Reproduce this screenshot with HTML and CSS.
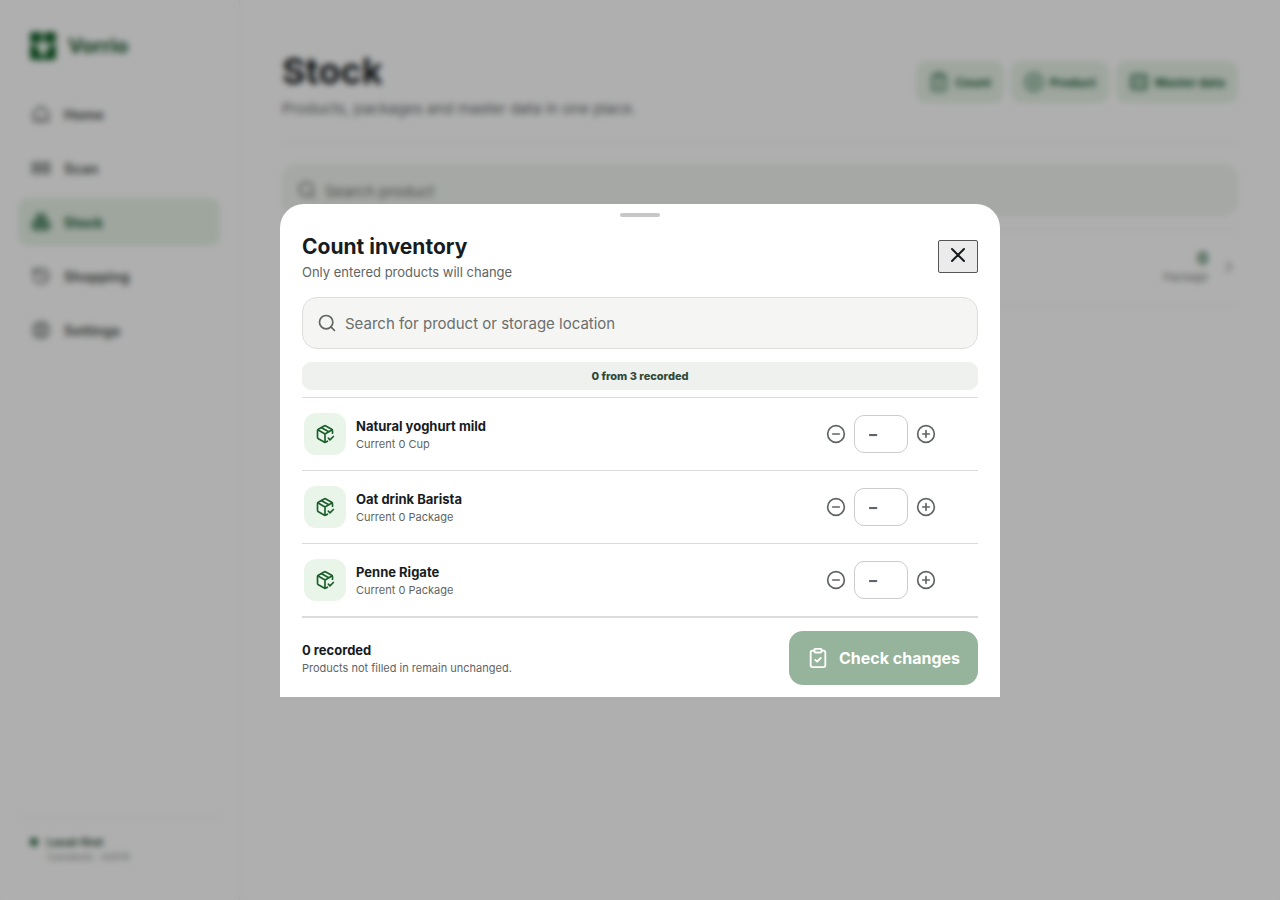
FILE: index.html
```html
<!DOCTYPE html>
<html lang="en">
<head>
    <meta charset="UTF-8">
    <meta name="viewport" content="width=device-width, initial-scale=1.0">
    <title>Vorrio - Stock</title>
    <link rel="stylesheet" href="styles.css">
</head>
<body>
    <!-- Shared icons -->
    <svg class="icon-defs" aria-hidden="true">
        <symbol id="icon-search" viewBox="0 0 24 24"><circle cx="11" cy="11" r="8"/><path d="M21 21l-4.3-4.3"/></symbol>
        <symbol id="icon-minus" viewBox="0 0 24 24"><circle cx="12" cy="12" r="10"/><path d="M8 12h8"/></symbol>
        <symbol id="icon-plus" viewBox="0 0 24 24"><circle cx="12" cy="12" r="10"/><path d="M8 12h8M12 8v8"/></symbol>
        <symbol id="icon-clipboard" viewBox="0 0 24 24"><rect x="8" y="2" width="8" height="4" rx="1"/><path d="M16 4h2a2 2 0 0 1 2 2v14a2 2 0 0 1-2 2H6a2 2 0 0 1-2-2V6a2 2 0 0 1 2-2h2M9 14l2 2 4-4"/></symbol>
        <symbol id="icon-package" viewBox="0 0 24 24"><path d="M12 22V12M3.3 7L12 12l8.7-5M7.5 4.3l9 5.1"/><path d="M21 11V8a2 2 0 0 0-1-1.7l-7-4a2 2 0 0 0-2 0l-7 4A2 2 0 0 0 3 8v8a2 2 0 0 0 1 1.7l7 4a2 2 0 0 0 2 0l2-1.1M16 17l2 2 4-4"/></symbol>
    </svg>

    <div class="app">
        <aside class="sidebar">
            <div class="brand">
                <svg class="brand-logo" viewBox="0 0 26 28"><rect width="12" height="11" rx="2"/><rect x="14" width="12" height="11" rx="2"/><path d="M0 13h6l7 12 7-12h6v12a3 3 0 0 1-3 3H3a3 3 0 0 1-3-3z"/><path class="brand-leaf" d="M7 13l5 5 1 3 1-3 5-5-2 8-4 4-4-4z"/></svg>
                <span>Vorrio</span>
            </div>
            <nav class="nav">
                <a href="#"><svg class="icon" viewBox="0 0 24 24"><path d="M3 10l9-7 9 7v9a2 2 0 0 1-2 2H5a2 2 0 0 1-2-2zM8 16c2 2 6 2 8 0"/></svg>Home</a>
                <a href="#"><svg class="icon" viewBox="0 0 24 24"><path d="M2 5v14M6 5v14M10 5v14M14 5v14M18 5v14M22 5v14"/></svg>Scan</a>
                <a href="#" class="active"><svg class="icon" viewBox="0 0 24 24"><path d="M7 4l5-2 5 2v6l-5 3-5-3zM2 13l5-3 5 3v6l-5 3-5-3zM12 13l5-3 5 3v6l-5 3-5-3zM2 13l5 3 5-3 5 3 5-3M7 16v6M17 16v6M7 5l5 3 5-3M12 8v5"/></svg>Stock</a>
                <a href="#"><svg class="icon" viewBox="0 0 24 24"><path d="M3 12a9 9 0 1 0 9-9 9.8 9.8 0 0 0-6.7 2.7L3 8M3 3v5h5M12 7v5l4 2"/></svg>Shopping</a>
                <a href="#"><svg class="icon" viewBox="0 0 24 24"><path d="M12 2l3 3 4-1 1 4 2 4-2 4-1 4-4-1-3 3-3-3-4 1-1-4-2-4 2-4 1-4 4 1z"/><circle cx="12" cy="12" r="4"/></svg>Settings</a>
            </nav>
            <div class="status">
                <span class="status-dot"></span>
                <div>
                    <strong>Local-first</strong>
                    <small>3 products · v0.6.10</small>
                </div>
            </div>
        </aside>

        <main class="main">
            <header class="page-header">
                <div>
                    <h1>Stock</h1>
                    <p>Products, packages and master data in one place.</p>
                </div>
                <div class="page-actions">
                    <button type="button"><svg class="icon"><use href="#icon-clipboard"/></svg>Count</button>
                    <button type="button"><svg class="icon"><use href="#icon-plus"/></svg>Product</button>
                    <button type="button"><svg class="icon" viewBox="0 0 24 24"><rect x="3" y="3" width="18" height="18" rx="3"/><path d="M3 8h18M3 16h18"/></svg>Master data</button>
                </div>
            </header>
            <label class="search page-search">
                <svg class="icon"><use href="#icon-search"/></svg>
                <input type="search" placeholder="Search product" aria-label="Search product">
            </label>
            <div class="stock-row">
                <div class="stock-amount">
                    <strong>0</strong>
                    <small>Package</small>
                </div>
                <svg class="icon" viewBox="0 0 24 24"><path d="M9 18l6-6-6-6"/></svg>
            </div>
        </main>
    </div>

    <!-- Count dialog -->
    <div class="backdrop">
        <section class="sheet" role="dialog" aria-modal="true" aria-labelledby="sheetTitle">
            <div class="sheet-handle"></div>
            <header class="sheet-header">
                <div>
                    <h2 id="sheetTitle">Count inventory</h2>
                    <p>Only entered products will change</p>
                </div>
                <button type="button" class="close-button" aria-label="Close">
                    <svg class="icon" viewBox="0 0 24 24"><path d="M18 6L6 18M6 6l12 12"/></svg>
                </button>
            </header>

            <label class="search">
                <svg class="icon"><use href="#icon-search"/></svg>
                <input type="search" placeholder="Search for product or storage location" aria-label="Search for product or storage location">
            </label>
            <div class="progress">0 from 3 recorded</div>

            <ul class="count-list">
                <li class="count-row">
                    <span class="tile"><svg class="icon"><use href="#icon-package"/></svg></span>
                    <div class="count-info">
                        <strong>Natural yoghurt mild</strong>
                        <small>Current 0 Cup</small>
                    </div>
                    <div class="stepper">
                        <button type="button" aria-label="Decrease"><svg class="icon"><use href="#icon-minus"/></svg></button>
                        <input type="text" inputmode="decimal" placeholder="–" aria-label="Natural yoghurt mild count">
                        <button type="button" aria-label="Increase"><svg class="icon"><use href="#icon-plus"/></svg></button>
                    </div>
                </li>
                <li class="count-row">
                    <span class="tile"><svg class="icon"><use href="#icon-package"/></svg></span>
                    <div class="count-info">
                        <strong>Oat drink Barista</strong>
                        <small>Current 0 Package</small>
                    </div>
                    <div class="stepper">
                        <button type="button" aria-label="Decrease"><svg class="icon"><use href="#icon-minus"/></svg></button>
                        <input type="text" inputmode="decimal" placeholder="–" aria-label="Oat drink Barista count">
                        <button type="button" aria-label="Increase"><svg class="icon"><use href="#icon-plus"/></svg></button>
                    </div>
                </li>
                <li class="count-row">
                    <span class="tile"><svg class="icon"><use href="#icon-package"/></svg></span>
                    <div class="count-info">
                        <strong>Penne Rigate</strong>
                        <small>Current 0 Package</small>
                    </div>
                    <div class="stepper">
                        <button type="button" aria-label="Decrease"><svg class="icon"><use href="#icon-minus"/></svg></button>
                        <input type="text" inputmode="decimal" placeholder="–" aria-label="Penne Rigate count">
                        <button type="button" aria-label="Increase"><svg class="icon"><use href="#icon-plus"/></svg></button>
                    </div>
                </li>
            </ul>

            <footer class="sheet-footer">
                <div class="count-info">
                    <strong>0 recorded</strong>
                    <small>Products not filled in remain unchanged.</small>
                </div>
                <button type="button" class="primary-button" disabled>
                    <svg class="icon"><use href="#icon-clipboard"/></svg>
                    Check changes
                </button>
            </footer>
        </section>
    </div>
</body>
</html>
```
FILE: styles.css
```css
/* Reset and base */
* {
    margin: 0;
    padding: 0;
    box-sizing: border-box;
}

body {
    font-family: Inter, "Liberation Sans", sans-serif;
    font-size: 14px;
    color: #171c1f;
    background: #fbfbfb;
}

button,
input {
    font: inherit;
    color: inherit;
}

strong,
small {
    display: block;
}

.icon-defs {
    position: absolute;
    width: 0;
    height: 0;
}

.icon {
    display: block;
    flex: none;
    width: 20px;
    height: 20px;
    fill: none;
    stroke: currentColor;
    stroke-width: 2;
    stroke-linecap: round;
    stroke-linejoin: round;
}

/* App shell */
.app {
    display: grid;
    grid-template-columns: 240px 1fr;
    min-height: 100vh;
}

.sidebar {
    display: flex;
    flex-direction: column;
    padding: 32px 19px 36px 18px;
    border-right: 1px solid #e4e6e4;
}

.brand {
    display: flex;
    align-items: center;
    gap: 12px;
    padding-left: 12px;
    font-size: 20px;
    font-weight: 700;
    line-height: 28px;
    color: #14522a;
}

.brand-logo {
    width: 26px;
    height: 28px;
    fill: #14602a;
}

.brand-leaf {
    fill: #b9dcb9;
}

.nav {
    display: grid;
    gap: 6px;
    margin-top: 30px;
}

.nav a {
    display: flex;
    align-items: center;
    gap: 13px;
    height: 48px;
    padding: 0 13px;
    border-radius: 10px;
    font-weight: 700;
    color: #555b58;
    text-decoration: none;
}

.nav a.active {
    color: #1c6138;
    background: #e3eee3;
}

.status {
    display: flex;
    gap: 9px;
    margin-top: auto;
    padding: 15px 12px 0;
    border-top: 1px solid #dfe2df;
}

.status-dot {
    width: 8px;
    height: 8px;
    margin-top: 4px;
    border-radius: 50%;
    background: #1c6138;
}

.status strong {
    font-size: 11px;
    line-height: 16px;
    color: #24482f;
}

.status small {
    font-size: 9px;
    line-height: 14px;
    color: #777c79;
}

/* Stock page */
.main {
    padding: 48px 42px;
}

.page-header {
    display: flex;
    align-items: center;
    justify-content: space-between;
    padding-bottom: 23px;
    border-bottom: 1px solid #dfe2df;
}

.page-header h1 {
    font-size: 36px;
    line-height: 46px;
}

.page-header p {
    margin-top: 4px;
    font-size: 15px;
    line-height: 22px;
    color: #63686a;
}

.page-actions {
    display: flex;
    gap: 7px;
    padding-bottom: 4px;
}

.page-actions button {
    display: flex;
    align-items: center;
    gap: 6px;
    height: 42px;
    padding: 0 13px;
    border: 0;
    border-radius: 10px;
    font-size: 12px;
    font-weight: 700;
    color: #1c6138;
    background: #e3eee3;
}

.search {
    display: flex;
    align-items: center;
    gap: 8px;
    height: 52px;
    padding: 0 14px;
    border: 1px solid #dcdedc;
    border-radius: 15px;
    color: #606563;
    background: #f5f5f3;
}

.search input {
    flex: 1;
    padding-top: 2px;
    border: 0;
    outline: 0;
    font-size: 15px;
    background: none;
}

.search input::placeholder {
    color: #6b6f6d;
}

.page-search {
    margin-top: 20px;
    border-color: #dfeadf;
    background: #edf1ec;
}

.stock-row {
    display: flex;
    align-items: center;
    justify-content: flex-end;
    gap: 12px;
    height: 77px;
    margin-top: 12px;
    border-top: 1px solid #dfe2df;
    border-bottom: 1px solid #dfe2df;
    color: #777c79;
}

.stock-row .icon {
    width: 18px;
    height: 18px;
}

.stock-amount {
    text-align: right;
}

.stock-amount strong {
    font-size: 16px;
    line-height: 20px;
    color: #1c6138;
}

.stock-amount small {
    font-size: 11px;
    line-height: 18px;
}

/* Dialog */
.backdrop {
    position: fixed;
    inset: 0;
    display: grid;
    place-items: center;
    background: rgba(0, 0, 0, 0.3);
    backdrop-filter: blur(3px);
}

.sheet {
    width: 100%;
    max-width: 720px;
    padding: 9px 22px 12px;
    border-radius: 24px 24px 0 0;
    background: #fff;
}

.sheet-handle {
    width: 40px;
    height: 4px;
    margin: 0 auto;
    border-radius: 2px;
    background: #c5c8c5;
}

.sheet-header {
    display: flex;
    align-items: center;
    justify-content: space-between;
    padding: 16px 0;
}

.sheet-header h2 {
    font-size: 21px;
    line-height: 28px;
}

.sheet-header p {
    padding-top: 2px;
    font-size: 13px;
    line-height: 18px;
    color: #606563;
}

.close-button {
    padding: 2px 7px 5px;
    border: 1px solid #555;
    border-radius: 2px;
    background: #ebebeb;
}

.close-button .icon {
    width: 24px;
    height: 24px;
}

.progress {
    margin: 13px 0 7px;
    border-radius: 9px;
    font-size: 11px;
    font-weight: 800;
    line-height: 28px;
    text-align: center;
    color: #30493a;
    background: #eef1ee;
}

.count-list {
    list-style: none;
    border-top: 1px solid #d9dcd9;
}

.count-row {
    display: flex;
    align-items: center;
    gap: 10px;
    padding: 15px 34px 15px 2px;
    border-bottom: 1px solid #d9dcd9;
}

.tile {
    display: grid;
    place-items: center;
    width: 42px;
    height: 42px;
    border-radius: 12px;
    color: #1b5e2b;
    background: #eaf5ea;
}

.count-info {
    flex: 1;
    padding-top: 2px;
}

.count-info strong {
    font-size: 13px;
    line-height: 18px;
}

.count-info small {
    font-size: 11px;
    line-height: 18px;
    color: #606563;
}

.stepper {
    display: flex;
    align-items: center;
}

.stepper button {
    padding: 8px;
    border: 0;
    color: #606563;
    background: none;
}

.stepper input {
    width: 54px;
    height: 38px;
    padding: 0 14px;
    border: 1px solid #c9cccb;
    border-radius: 10px;
    font-size: 16px;
    font-weight: 800;
    background: #fff;
}

.stepper input::placeholder {
    color: #606563;
}

.sheet-footer {
    display: flex;
    align-items: center;
    padding-top: 13px;
    border-top: 1px solid #d9dcd9;
}

.primary-button {
    display: flex;
    align-items: center;
    gap: 10px;
    height: 54px;
    padding: 0 18px;
    border: 0;
    border-radius: 14px;
    font-size: 16px;
    font-weight: 700;
    color: #fff;
    background: #96b39b;
}

.primary-button .icon {
    width: 22px;
    height: 22px;
}
```
